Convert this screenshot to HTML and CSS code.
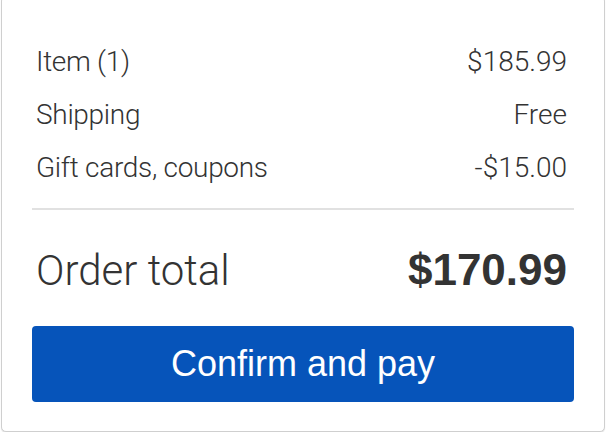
FILE: index.html
```html
<!DOCTYPE html>
<html lang="en">
<head>
<meta charset="utf-8">
<title>Order summary</title>
<link rel="stylesheet" href="styles.css">
</head>
<body>
<section class="card">
  <div class="lines">
    <div class="row"><span class="label">Item (1)</span><span class="value">$185.99</span></div>
    <div class="row"><span class="label">Shipping</span><span class="value">Free</span></div>
    <div class="row"><span class="label">Gift cards, coupons</span><span class="value">-$15.00</span></div>
  </div>
  <hr class="divider">
  <div class="total">
    <span class="total-label">Order total</span>
    <span class="total-value">$170.99</span>
  </div>
  <button class="pay" type="button">Confirm and pay</button>
</section>
</body>
</html>
```

FILE: styles.css
```css
html, body {
  margin: 0;
  padding: 0;
  background: #ffffff;
}

.card {
  box-sizing: border-box;
  width: 604px;
  margin: -4px 0 0 1px;
  padding: 38px 30px 29px;
  background: #fff;
  border: 1px solid #cfcfcf;
  border-radius: 5px;
  box-shadow: 0 1px 1px rgba(0, 0, 0, 0.12);
  color: #333;
}

.lines {
  display: flex;
  flex-direction: column;
}

.row {
  display: flex;
  justify-content: space-between;
  align-items: center;
  height: 53px;
  line-height: 53px;
  padding: 0 7px 0 4px;
  font-family: Roboto, "Liberation Sans", sans-serif;
  font-weight: 300;
  font-size: 28px;
  color: #333;
}

.label {
  letter-spacing: -0.3px;
}

.divider {
  border: 0;
  height: 2px;
  background: #e1e1e1;
  margin: 14px 0 0;
}

.total {
  display: flex;
  justify-content: space-between;
  align-items: baseline;
  margin-top: 38px;
  height: 44px;
  line-height: 44px;
  padding: 0 7px 0 4px;
}

.total-label {
  font-family: Roboto, "Liberation Sans", sans-serif;
  font-weight: 300;
  font-size: 42px;
  color: #333;
}

.total-value {
  font-family: "Liberation Sans", Arial, sans-serif;
  font-weight: 700;
  font-size: 44px;
  color: #333;
}

.pay {
  display: block;
  width: 100%;
  height: 76px;
  margin-top: 34px;
  border: 0;
  border-radius: 4px;
  background: #0654ba;
  color: #fff;
  font-family: "Liberation Sans", Arial, sans-serif;
  font-size: 36px;
  cursor: pointer;
}
```
